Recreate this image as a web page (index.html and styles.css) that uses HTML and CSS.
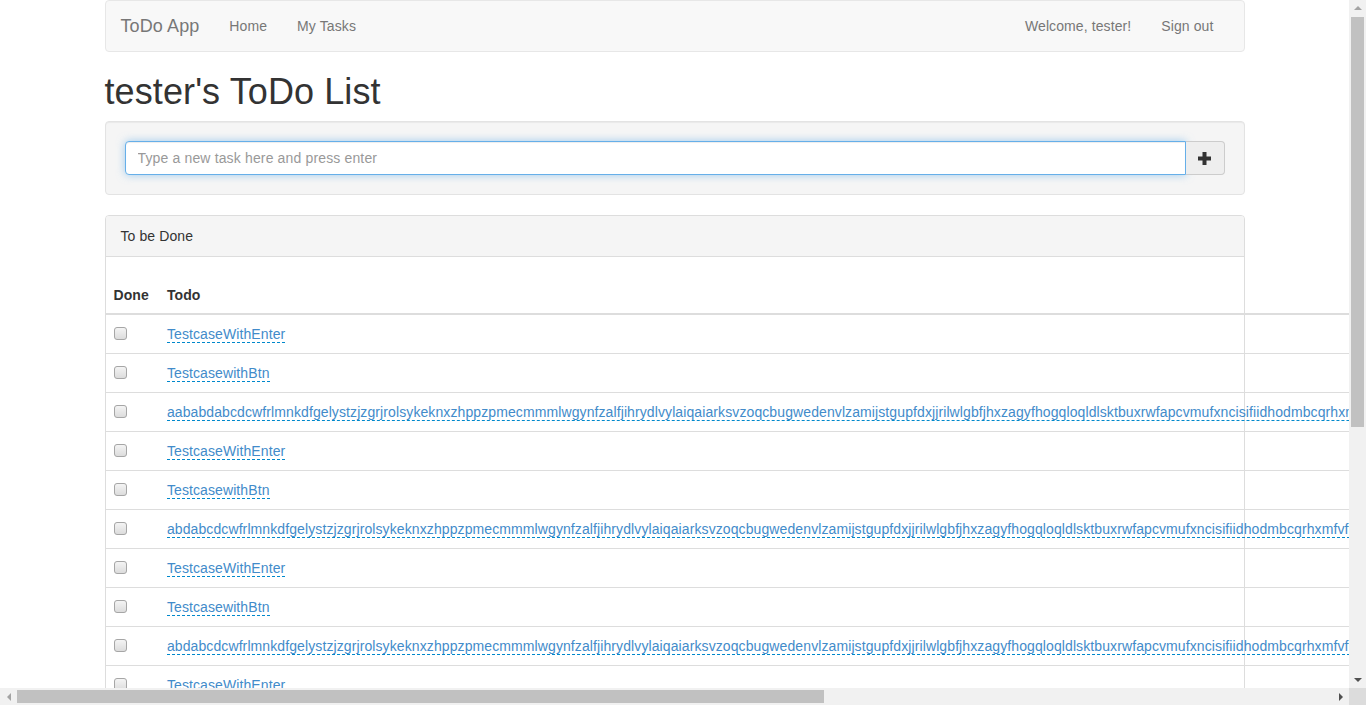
FILE: index.html
```html
<!DOCTYPE html>
<html lang="en">
<head>
<meta charset="utf-8">
<title>ToDo App</title>
<link rel="stylesheet" href="styles.css">
</head>
<body>
<div class="screen">
  <div class="viewport">
    <div class="container">
      <nav class="navbar">
        <a class="navbar-brand" href="#">ToDo App</a>
        <ul class="nav">
          <li><a href="#">Home</a></li>
          <li><a href="#">My Tasks</a></li>
        </ul>
        <ul class="nav nav-right">
          <li><a href="#">Welcome, tester!</a></li>
          <li><a href="#">Sign out</a></li>
        </ul>
      </nav>

      <h1 class="page-title">tester's ToDo List</h1>

      <div class="well">
        <div class="input-group">
          <input class="form-control is-focused" type="text" placeholder="Type a new task here and press enter" autofocus>
          <button class="btn-add" type="button" aria-label="Add">
            <svg class="icon-plus" width="13" height="13" viewBox="0 0 13 13" aria-hidden="true">
              <rect x="0" y="4.5" width="13" height="4" fill="#333"/>
              <rect x="4.5" y="0" width="4" height="13" fill="#333"/>
            </svg>
          </button>
        </div>
      </div>

      <div class="panel">
        <div class="panel-heading">To be Done</div>
        <table class="table">
          <thead>
            <tr><th class="col-done">Done</th><th>Todo</th></tr>
          </thead>
          <tbody>
            <tr><td class="col-done"><input type="checkbox"></td><td><a class="editable" href="#">TestcaseWithEnter</a></td></tr>
            <tr><td class="col-done"><input type="checkbox"></td><td><a class="editable" href="#">TestcasewithBtn</a></td></tr>
            <tr><td class="col-done"><input type="checkbox"></td><td><a class="editable" href="#">aababdabcdcwfrlmnkdfgelystzjzgrjrolsykeknxzhppzpmecmmmlwgynfzalfjihrydlvylaiqaiarksvzoqcbugwedenvlzamijstgupfdxjjrilwlgbfjhxzagyfhogqloqldlsktbuxrwfapcvmufxncisifiidhodmbcqrhxmfvftqnbzkwhyeopxrjdlsmgcvaiufhtqzokwnrbyxpelsjgdmvcaiuhtrqzonwkbyxeplsjgmdvcaiufhrtqozkwnbyxepslgjmdcvauihrtzoqknwbxyeplsjgdmcvuaihtroqz</a></td></tr>
            <tr><td class="col-done"><input type="checkbox"></td><td><a class="editable" href="#">TestcaseWithEnter</a></td></tr>
            <tr><td class="col-done"><input type="checkbox"></td><td><a class="editable" href="#">TestcasewithBtn</a></td></tr>
            <tr><td class="col-done"><input type="checkbox"></td><td><a class="editable" href="#">abdabcdcwfrlmnkdfgelystzjzgrjrolsykeknxzhppzpmecmmmlwgynfzalfjihrydlvylaiqaiarksvzoqcbugwedenvlzamijstgupfdxjjrilwlgbfjhxzagyfhogqloqldlsktbuxrwfapcvmufxncisifiidhodmbcqrhxmfvftqnbzkwhyeopxrjdlsmgcvaiufhtqzokwnrbyxpelsjgdmvcaiuhtrqzonwkbyxeplsjgmdvcaiufhrtqozkwnbyxepslgjmdcvauihrtzoqknwbxyeplsjgdmcvuaihtroqz</a></td></tr>
            <tr><td class="col-done"><input type="checkbox"></td><td><a class="editable" href="#">TestcaseWithEnter</a></td></tr>
            <tr><td class="col-done"><input type="checkbox"></td><td><a class="editable" href="#">TestcasewithBtn</a></td></tr>
            <tr><td class="col-done"><input type="checkbox"></td><td><a class="editable" href="#">abdabcdcwfrlmnkdfgelystzjzgrjrolsykeknxzhppzpmecmmmlwgynfzalfjihrydlvylaiqaiarksvzoqcbugwedenvlzamijstgupfdxjjrilwlgbfjhxzagyfhogqloqldlsktbuxrwfapcvmufxncisifiidhodmbcqrhxmfvftqnbzkwhyeopxrjdlsmgcvaiufhtqzokwnrbyxpelsjgdmvcaiuhtrqzonwkbyxeplsjgmdvcaiufhrtqozkwnbyxepslgjmdcvauihrtzoqknwbxyeplsjgdmcvuaihtroqz</a></td></tr>
            <tr><td class="col-done"><input type="checkbox"></td><td><a class="editable" href="#">TestcaseWithEnter</a></td></tr>
            <tr><td class="col-done"><input type="checkbox"></td><td><a class="editable" href="#">TestcasewithBtn</a></td></tr>
            <tr><td class="col-done"><input type="checkbox"></td><td><a class="editable" href="#">abdabcdcwfrlmnkdfgelystzjzgrjrolsykeknxzhppzpmecmmmlwgynfzalfjihrydlvylaiqaiarksvzoqcbugwedenvlzamijstgupfdxjjrilwlgbfjhxzagyfhogqloqldlsktbuxrwfapcvmufxncisifiidhodmbcqrhxmfvftqnbzkwhyeopxrjdlsmgcvaiufhtqzokwnrbyxpelsjgdmvcaiuhtrqzonwkbyxeplsjgmdvcaiufhrtqozkwnbyxepslgjmdcvauihrtzoqknwbxyeplsjgdmcvuaihtroqz</a></td></tr>
          </tbody>
        </table>
      </div>
    </div>
  </div>

  <div class="vscroll" aria-hidden="true">
    <div class="sb-btn"><span class="arrow arrow-up"></span></div>
    <div class="sb-track sb-track-v">
      <div class="sb-thumb sb-thumb-v" style="height: 410px"></div>
    </div>
    <div class="sb-btn"><span class="arrow arrow-down"></span></div>
  </div>

  <div class="hscroll" aria-hidden="true">
    <div class="sb-btn"><span class="arrow arrow-left"></span></div>
    <div class="sb-track sb-track-h">
      <div class="sb-thumb sb-thumb-h" style="width: 807px"></div>
    </div>
    <div class="sb-btn"><span class="arrow arrow-right"></span></div>
  </div>

  <div class="sb-corner" aria-hidden="true"></div>
</div>
</body>
</html>
```

FILE: styles.css
```css
* {
  box-sizing: border-box;
}

html,
body {
  margin: 0;
  height: 100%;
  overflow: hidden;
}

body {
  font-family: "Liberation Sans", Arial, Helvetica, sans-serif;
  font-size: 14px;
  line-height: 1.42857;
  letter-spacing: 0.1px;
  color: #333;
  background: #fff;
}

a {
  color: #428bca;
  text-decoration: none;
}

/* ---------- window frame with classic scrollbars ---------- */
.screen {
  display: grid;
  grid-template-columns: 1fr 17px;
  grid-template-rows: 1fr 17px;
  width: 100%;
  height: 100%;
}
.viewport {
  min-width: 0;
  min-height: 0;
  overflow: hidden;
  background: #fff;
}
.vscroll {
  display: flex;
  flex-direction: column;
  background: #f1f1f1;
}
.hscroll {
  display: flex;
  background: #f1f1f1;
}
.sb-btn {
  display: flex;
  align-items: center;
  justify-content: center;
  flex: 0 0 17px;
  width: 17px;
  height: 17px;
}
.sb-track {
  flex: 1;
  display: flex;
}
.sb-track-v {
  flex-direction: column;
  padding: 0 2px;
}
.sb-track-h {
  padding: 2px 0;
}
.sb-thumb {
  background: #c1c1c1;
}
.sb-thumb-v {
  width: 100%;
}
.sb-thumb-h {
  height: 100%;
}
.sb-corner {
  background: #dcdcdc;
}
.arrow {
  display: block;
  width: 0;
  height: 0;
  border-style: solid;
  border-color: transparent;
}
.arrow-up {
  border-width: 0 4px 4px 4px;
  border-bottom-color: #a3a3a3;
  margin-top: -1px;
}
.arrow-down {
  border-width: 4px 4px 0 4px;
  border-top-color: #505050;
}
.arrow-left {
  border-width: 4px 4px 4px 0;
  border-right-color: #a3a3a3;
}
.arrow-right {
  border-width: 4px 0 4px 4px;
  border-left-color: #505050;
}

/* ---------- layout ---------- */
.container {
  width: 1170px;
  margin: 0 auto;
  padding: 0 15px;
}

/* ---------- navbar ---------- */
.navbar {
  display: flex;
  align-items: stretch;
  min-height: 50px;
  margin-bottom: 20px;
  padding-right: 15px;
  background: #f8f8f8;
  border: 1px solid #e7e7e7;
  border-radius: 4px;
}
.navbar-brand {
  padding: 15px;
  font-size: 18px;
  line-height: 20px;
  color: #777;
}
.nav {
  display: flex;
  margin: 0;
  padding: 0;
  list-style: none;
}
.nav a {
  display: block;
  padding: 15px;
  line-height: 20px;
  color: #777;
}
.nav-right {
  margin-left: auto;
}

/* ---------- heading ---------- */
.page-title {
  margin: 20px 0 10px;
  font-size: 36px;
  font-weight: 500;
  line-height: 39px;
  color: #333;
}

/* ---------- well / input ---------- */
.well {
  margin-bottom: 20px;
  padding: 19px;
  background: #f5f5f5;
  border: 1px solid #e3e3e3;
  border-radius: 4px;
  box-shadow: inset 0 1px 1px rgba(0, 0, 0, 0.05);
}
.input-group {
  display: flex;
}
.form-control {
  flex: 1;
  height: 34px;
  padding: 6px 12px;
  font-family: inherit;
  font-size: 14px;
  line-height: 20px;
  letter-spacing: 0.15px;
  color: #555;
  background: #fff;
  border: 1px solid #ccc;
  border-radius: 4px 0 0 4px;
  box-shadow: inset 0 1px 1px rgba(0, 0, 0, 0.075);
  outline: none;
}
.form-control::placeholder {
  color: #999;
}
.form-control.is-focused,
.form-control:focus {
  border-color: #66afe9;
  box-shadow: inset 0 1px 1px rgba(0, 0, 0, 0.075), 0 0 8px rgba(102, 175, 233, 0.6);
}
.btn-add {
  display: flex;
  align-items: center;
  justify-content: center;
  width: 39px;
  height: 34px;
  padding: 0;
  background: #eee;
  border: 1px solid #ccc;
  border-left: 0;
  border-radius: 0 4px 4px 0;
  cursor: pointer;
}
.icon-plus {
  display: block;
}

/* ---------- panel / table ---------- */
.panel {
  margin-bottom: 20px;
  background: #fff;
  border: 1px solid #ddd;
  border-radius: 4px;
}
.panel-heading {
  padding: 10px 15px;
  line-height: 20px;
  color: #333;
  background: #f5f5f5;
  border-bottom: 1px solid #ddd;
  border-radius: 3px 3px 0 0;
}
.table {
  width: 100%;
  margin: 0;
  border-collapse: collapse;
  border-spacing: 0;
}
.table th {
  padding: 28px 8px 8px;
  line-height: 20px;
  text-align: left;
  font-weight: bold;
  vertical-align: bottom;
  border-bottom: 2px solid #ddd;
}
.table td {
  padding: 9px 8px;
  line-height: 20px;
  vertical-align: top;
  border-top: 1px solid #ddd;
}
.table .col-done {
  padding-right: 10px;
}
.table input[type="checkbox"] {
  appearance: none;
  -webkit-appearance: none;
  display: block;
  width: 13px;
  height: 13px;
  margin: 3px 0 0;
  border: 1px solid #a6a6a6;
  border-radius: 3px;
  background: linear-gradient(#f4f4f4, #dcdcdc);
}
.editable {
  border-bottom: 1px dashed #0088cc;
}
```
